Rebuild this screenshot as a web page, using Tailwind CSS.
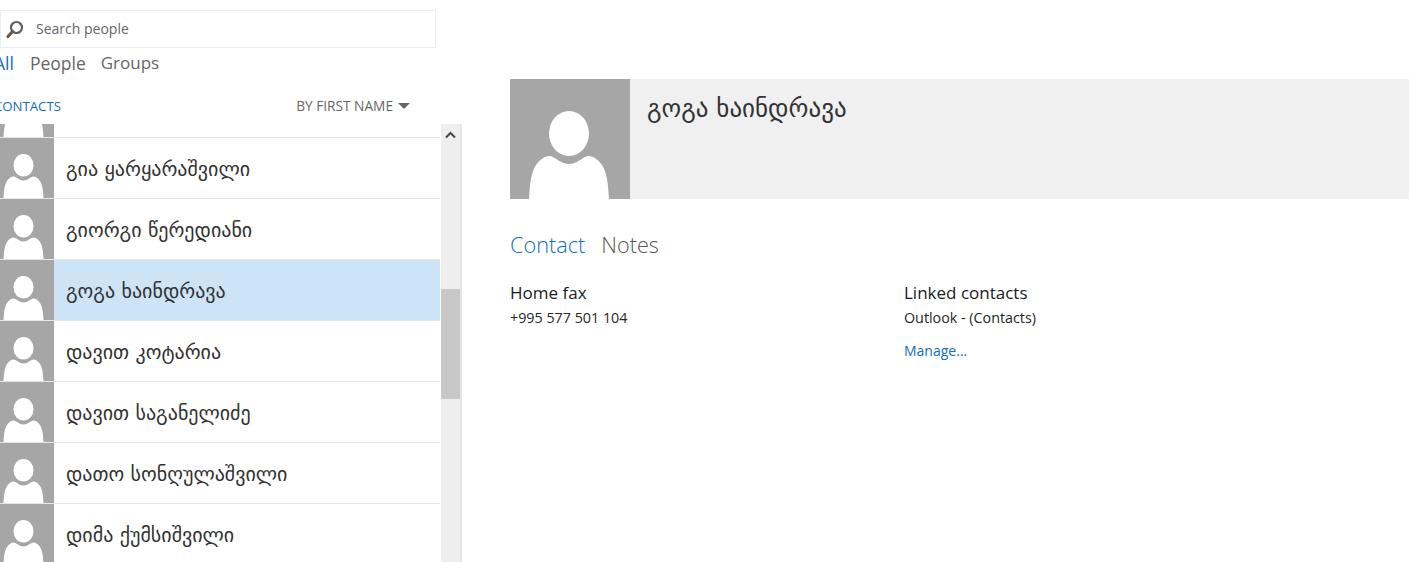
<!DOCTYPE html>
<html><head><meta charset="utf-8"><script src="https://cdn.jsdelivr.net/npm/@tailwindcss/browser@4"></script></head>
<body class="bg-white overflow-hidden">
<div class="flex h-[562px] w-[1409px] overflow-hidden font-['Open_Sans','DejaVu_Sans',sans-serif] text-[#262626]">
  <aside class="w-[510px] shrink-0 flex flex-col pt-[10px]">
    <div class="w-[436px] h-[38px] border border-[#e6f0f8] flex items-center shrink-0">
      <svg class="ml-[4px] w-[19px] h-[19px]" viewBox="0 0 19 19"><circle cx="11.500" cy="7.500" r="5.500" fill="none" stroke="#5f5f5f" stroke-width="2.200"/><path d="M7.500 11.500 3 16.500" stroke="#6b5a3f" stroke-width="3.200" stroke-linecap="round"/></svg>
      <span class="ml-[12px] mb-[2px] text-[14px] text-[#666]">Search people</span>
    </div>
    <nav class="flex h-[30px] items-center text-[17.500px] text-[#666] shrink-0 -ml-[6px] gap-[16px]">
      <span class="text-[#106ebe]">All</span><span>People</span><span class="-ml-[1px] text-[17px]">Groups</span>
    </nav>
    <div class="flex justify-between items-center w-[410px] h-[46px] pt-[11px] shrink-0">
      <span class="text-[13.200px] text-[#106ebe] -ml-[6px]">CONTACTS</span>
      <span class="flex items-center gap-[5px] text-[13.700px] text-[#666]">BY FIRST NAME<svg class="w-[12px] h-[6px]" viewBox="0 0 12 6"><path d="M0 0h12L6 6z" fill="#666"/></svg></span>
    </div>
    <div class="flex h-[438px] w-[462px] overflow-hidden">
      <div class="w-[440px] flex flex-col overflow-hidden font-['DejaVu_Sans','Open_Sans',sans-serif] text-[20px] text-[#333]">
        <div class="h-[14px] shrink-0 overflow-hidden border-b border-[#e6e6e6] flex flex-col justify-end">
          <svg class="w-[54px] h-[60px] shrink-0 bg-[#a6a6a6]" viewBox="12 0 108 120"><ellipse cx="59" cy="54.500" rx="20" ry="22.500" fill="#fff"/><path d="M19 120c1-16 2-26 7-34 3-5 9-9 13-9 6 0 11 8 20 8s14-8 20-8c4 0 10 4 13 9 5 8 6 18 7 34z" fill="#fff"/></svg>
        </div>
        <div class="h-[61px] shrink-0 flex items-center border-b border-[#e6e6e6] bg-white">
          <svg class="w-[54px] h-[60px] shrink-0 bg-[#a6a6a6]" viewBox="12 0 108 120"><ellipse cx="59" cy="54.500" rx="20" ry="22.500" fill="#fff"/><path d="M19 120c1-16 2-26 7-34 3-5 9-9 13-9 6 0 11 8 20 8s14-8 20-8c4 0 10 4 13 9 5 8 6 18 7 34z" fill="#fff"/></svg>
          <span class="ml-[12px] pt-[2px]">გია ყარყარაშვილი</span>
        </div>
        <div class="h-[61px] shrink-0 flex items-center border-b border-[#e6e6e6] bg-white">
          <svg class="w-[54px] h-[60px] shrink-0 bg-[#a6a6a6]" viewBox="12 0 108 120"><ellipse cx="59" cy="54.500" rx="20" ry="22.500" fill="#fff"/><path d="M19 120c1-16 2-26 7-34 3-5 9-9 13-9 6 0 11 8 20 8s14-8 20-8c4 0 10 4 13 9 5 8 6 18 7 34z" fill="#fff"/></svg>
          <span class="ml-[12px] pt-[2px]">გიორგი წერედიანი</span>
        </div>
        <div class="h-[61px] shrink-0 flex items-center border-b border-[#e6e6e6] bg-[#cde4f7]">
          <svg class="w-[54px] h-[60px] shrink-0 bg-[#a6a6a6]" viewBox="12 0 108 120"><ellipse cx="59" cy="54.500" rx="20" ry="22.500" fill="#fff"/><path d="M19 120c1-16 2-26 7-34 3-5 9-9 13-9 6 0 11 8 20 8s14-8 20-8c4 0 10 4 13 9 5 8 6 18 7 34z" fill="#fff"/></svg>
          <span class="ml-[12px] pt-[2px]">გოგა ხაინდრავა</span>
        </div>
        <div class="h-[61px] shrink-0 flex items-center border-b border-[#e6e6e6] bg-white">
          <svg class="w-[54px] h-[60px] shrink-0 bg-[#a6a6a6]" viewBox="12 0 108 120"><ellipse cx="59" cy="54.500" rx="20" ry="22.500" fill="#fff"/><path d="M19 120c1-16 2-26 7-34 3-5 9-9 13-9 6 0 11 8 20 8s14-8 20-8c4 0 10 4 13 9 5 8 6 18 7 34z" fill="#fff"/></svg>
          <span class="ml-[12px] pt-[2px]">დავით კოტარია</span>
        </div>
        <div class="h-[61px] shrink-0 flex items-center border-b border-[#e6e6e6] bg-white">
          <svg class="w-[54px] h-[60px] shrink-0 bg-[#a6a6a6]" viewBox="12 0 108 120"><ellipse cx="59" cy="54.500" rx="20" ry="22.500" fill="#fff"/><path d="M19 120c1-16 2-26 7-34 3-5 9-9 13-9 6 0 11 8 20 8s14-8 20-8c4 0 10 4 13 9 5 8 6 18 7 34z" fill="#fff"/></svg>
          <span class="ml-[12px] pt-[2px]">დავით საგანელიძე</span>
        </div>
        <div class="h-[61px] shrink-0 flex items-center border-b border-[#e6e6e6] bg-white">
          <svg class="w-[54px] h-[60px] shrink-0 bg-[#a6a6a6]" viewBox="12 0 108 120"><ellipse cx="59" cy="54.500" rx="20" ry="22.500" fill="#fff"/><path d="M19 120c1-16 2-26 7-34 3-5 9-9 13-9 6 0 11 8 20 8s14-8 20-8c4 0 10 4 13 9 5 8 6 18 7 34z" fill="#fff"/></svg>
          <span class="ml-[12px] pt-[2px]">დათო სონღულაშვილი</span>
        </div>
        <div class="h-[61px] shrink-0 flex items-center border-b border-[#e6e6e6] bg-white">
          <svg class="w-[54px] h-[60px] shrink-0 bg-[#a6a6a6]" viewBox="12 0 108 120"><ellipse cx="59" cy="54.500" rx="20" ry="22.500" fill="#fff"/><path d="M19 120c1-16 2-26 7-34 3-5 9-9 13-9 6 0 11 8 20 8s14-8 20-8c4 0 10 4 13 9 5 8 6 18 7 34z" fill="#fff"/></svg>
          <span class="ml-[12px] pt-[2px]">დიმა ქუმსიშვილი</span>
        </div>
      </div>
      <div class="w-[21px] ml-[1px] shrink-0 flex flex-col bg-[#eeeeee] border-r-[2px] border-[#e4e4e4]">
        <div class="h-[165px] shrink-0 pt-[7px] pl-[3px]"><svg class="w-[13px] h-[8px]" viewBox="0 0 13 8"><path d="M2 6.500 6.500 2 11 6.500" fill="none" stroke="#444" stroke-width="2"/></svg></div>
        <div class="h-[110px] shrink-0 bg-[#c8c8c8]"></div>
      </div>
    </div>
  </aside>
  <main class="flex-1 pt-[79px] flex flex-col">
    <header class="h-[120px] bg-[#f0f0f0] flex shrink-0">
      <svg class="w-[120px] h-[120px] bg-[#a6a6a6] shrink-0" viewBox="0 0 120 120"><ellipse cx="59" cy="54.500" rx="20" ry="22.500" fill="#fff"/><path d="M19 120c1-16 2-26 7-34 3-5 9-9 13-9 6 0 11 8 20 8s14-8 20-8c4 0 10 4 13 9 5 8 6 18 7 34z" fill="#fff"/></svg>
      <h1 class="ml-[17px] mt-[13px] text-[25px] leading-[34px] font-normal font-['DejaVu_Sans','Open_Sans',sans-serif] text-[#333]">გოგა ხაინდრავა</h1>
    </header>
    <div class="flex gap-[16px] mt-[31px] text-[21.700px] leading-[30px] font-light"><span class="text-[#106ebe]">Contact</span><span class="text-[#555]">Notes</span></div>
    <div class="flex mt-[21px]">
      <section class="w-[394px]">
        <h2 class="text-[17px] leading-[24px] text-[#1a1a1a]">Home fax</h2>
        <p class="text-[14.300px] leading-[20px] mt-[3px]">+995 577 501 104</p>
      </section>
      <section>
        <h2 class="text-[17px] leading-[24px] text-[#1a1a1a]">Linked contacts</h2>
        <p class="text-[14.300px] leading-[20px] mt-[3px]">Outlook - (Contacts)</p>
        <a class="block text-[14px] leading-[20px] mt-[13px] text-[#106ebe]">Manage...</a>
      </section>
    </div>
  </main>
</div>
</body></html>
